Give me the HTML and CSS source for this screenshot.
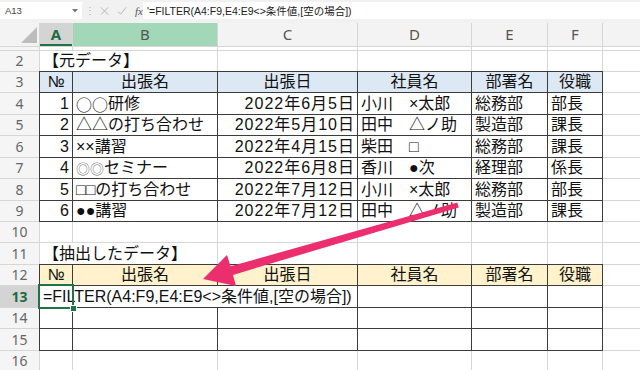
FILE: index.html
```html
<!DOCTYPE html>
<html lang="ja">
<head>
    <meta charset="UTF-8">
    <title>FILTER関数 - Excel</title>
    <link rel="stylesheet" href="styles.css">
</head>
<body>
    <div class="formula-bar">
        <div class="name-box">A13<svg width="6" height="4" viewBox="0 0 6 4"><path d="M0 0h6L3 3.5z" fill="#777"/></svg></div>
        <div class="tools">
            <span class="grip">⋮</span>
            <svg width="10" height="10" viewBox="0 0 10 10"><path d="M1 1l8 8M9 1l-8 8" stroke="#b8b8b8" stroke-width="1.1"/></svg>
            <svg width="11" height="10" viewBox="0 0 11 10"><path d="M1 5.5l3 3L10 1" stroke="#b8b8b8" stroke-width="1.1" fill="none"/></svg>
            <i class="fx">fx</i>
        </div>
        <div class="formula-input">'=FILTER(A4:F9,E4:E9&lt;&gt;条件値,[空の場合])</div>
    </div>

    <div class="sheet">
        <div class="corner"><svg width="16" height="16" viewBox="0 0 16 16"><path d="M16 0V16H0z" fill="#bdbdbd"/></svg></div>
        <div class="ch sel">A</div><div class="ch hl">B</div><div class="ch">C</div><div class="ch">D</div><div class="ch">E</div><div class="ch">F</div><div class="ch"></div>

        <div class="rh"></div><div></div><div></div><div></div><div></div><div></div><div></div><div></div>

        <div class="rh">2</div><div class="span2">【元データ】</div><div></div><div></div><div></div><div></div><div></div>

        <div class="rh">3</div>
        <div class="t blue ctr">№</div><div class="t blue ctr">出張名</div><div class="t blue ctr">出張日</div><div class="t blue ctr">社員名</div><div class="t blue ctr">部署名</div><div class="t blue ctr">役職</div><div></div>

        <div class="rh">4</div>
        <div class="t num">1</div><div class="t"><span class="jp">○○</span>研修</div><div class="t num date">2022年6月5日</div><div class="t">小川　×太郎</div><div class="t">総務部</div><div class="t">部長</div><div></div>

        <div class="rh">5</div>
        <div class="t num">2</div><div class="t">△△の打ち合わせ</div><div class="t num date">2022年5月10日</div><div class="t">田中　△ノ助</div><div class="t">製造部</div><div class="t">課長</div><div></div>

        <div class="rh">6</div>
        <div class="t num">3</div><div class="t">××講習</div><div class="t num date">2022年4月15日</div><div class="t">柴田　□</div><div class="t">総務部</div><div class="t">課長</div><div></div>

        <div class="rh">7</div>
        <div class="t num">4</div><div class="t"><span class="mark">◎◎</span>セミナー</div><div class="t num date">2022年6月8日</div><div class="t">香川　●次</div><div class="t">経理部</div><div class="t">係長</div><div></div>

        <div class="rh">8</div>
        <div class="t num">5</div><div class="t">□□の打ち合わせ</div><div class="t num date">2022年7月12日</div><div class="t">小川　×太郎</div><div class="t">総務部</div><div class="t">部長</div><div></div>

        <div class="rh">9</div>
        <div class="t num">6</div><div class="t">●●講習</div><div class="t num date">2022年7月12日</div><div class="t">田中　△ノ助</div><div class="t">製造部</div><div class="t">課長</div><div></div>

        <div class="rh">10</div><div></div><div></div><div></div><div></div><div></div><div></div><div></div>

        <div class="rh">11</div><div class="span2">【抽出したデータ】</div><div></div><div></div><div></div><div></div><div></div>

        <div class="rh">12</div>
        <div class="t cream ctr">№</div><div class="t cream ctr">出張名</div><div class="t cream ctr">出張日</div><div class="t cream ctr">社員名</div><div class="t cream ctr">部署名</div><div class="t cream ctr">役職</div><div></div>

        <div class="rh sel">13</div>
        <div class="active">=FILTER(A4:F9,E4:E9&lt;&gt;条件値,[空の場合])</div><div class="span2"></div><div class="t"></div><div class="t"></div><div class="t"></div><div></div>

        <div class="rh">14</div>
        <div class="t"></div><div class="t"></div><div class="t"></div><div class="t"></div><div class="t"></div><div class="t"></div><div></div>

        <div class="rh">15</div>
        <div class="t"></div><div class="t"></div><div class="t"></div><div class="t"></div><div class="t"></div><div class="t"></div><div></div>

        <div class="rh">16</div><div></div><div></div><div></div><div></div><div></div><div></div><div></div>
    </div>

    <svg class="arrow" width="640" height="370" viewBox="0 0 640 370">
        <path d="M203 279L227 255L230.5 266.3L457.3 202.6L458.7 207.4L233 274.9L236 286Z" fill="#ec2d6e"/>
    </svg>
</body>
</html>
```

FILE: styles.css
```css
body {
    margin: 0;
    width: 640px;
    height: 370px;
    overflow: hidden;
    position: relative;
    background: #fff;
    font-family: "Liberation Sans", "Noto Sans CJK JP", sans-serif;
}
.formula-bar {
    display: flex;
    align-items: flex-start;
    height: 23px;
    padding-top: 2px;
    box-sizing: border-box;
    background: #f1f1f1;
}
.name-box {
    width: 82px;
    height: 17px;
    display: flex;
    align-items: center;
    justify-content: space-between;
    padding: 0 4px 0 5px;
    box-sizing: border-box;
    background: #fff;
    font-size: 9.5px;
    color: #444;
}
.tools {
    width: 61px;
    height: 17px;
    display: flex;
    align-items: center;
    gap: 8px;
    padding-left: 3px;
    box-sizing: border-box;
}
.grip {
    font-size: 10px;
    color: #aaa;
    margin-right: -3px;
}
.fx {
    font-family: "Liberation Serif", serif;
    font-size: 11px;
    color: #555;
}
.formula-input {
    flex: 1;
    height: 17px;
    display: flex;
    align-items: center;
    padding-left: 4px;
    background: #fff;
    font-size: 10.5px;
    color: #222;
    white-space: nowrap;
}
.sheet {
    display: grid;
    width: 640px;
    grid-template-columns: 39px 32px 144px 139px 113px 75px 54px 1fr;
    grid-template-rows: 23px 3px 20px 20px 21px 20px 21px 20px 21px 20px 20px 21px 20px 21px 20px 21px 20px;
    gap: 1px;
    background: #d6d6d6;
    font-size: 16px;
    color: #111;
}
.sheet > div {
    display: flex;
    align-items: center;
    padding: 0 3px;
    background: #fff;
    white-space: nowrap;
    line-height: 1;
    min-width: 0;
}
.sheet > .corner {
    justify-content: flex-end;
    align-items: flex-end;
    padding: 0 2px 3px 0;
    background: #f3f3f3;
}
.sheet > .ch {
    justify-content: center;
    background: #f3f3f3;
    color: #555;
    font-family: "Noto Sans", sans-serif;
    font-size: 15px;
}
.sheet > .rh {
    justify-content: center;
    padding: 0;
    background: #f5f5f5;
    color: #666;
    font-family: "Noto Sans", sans-serif;
    font-size: 14px;
}
.sheet > .sel {
    background: #d4d4d4;
    color: #1d6b41;
    font-weight: bold;
}
.sheet > .ch.sel {
    box-shadow: inset 0 -2px #217346;
}
.sheet > .hl {
    background: #a2d7b7;
}
.span2 {
    grid-column: span 2;
}
.t {
    outline: 1px solid #3c3c3c;
}
.sheet > .blue {
    background: #dde8f5;
}
.sheet > .cream {
    background: #fff2cc;
}
.sheet > .ctr {
    justify-content: center;
}
.sheet > .num {
    justify-content: flex-end;
}
.sheet > .date {
    letter-spacing: 1px;
    padding-right: 2px;
}
.jp {
    font-family: "Noto Sans CJK JP", sans-serif;
}
.mark {
    font-family: "Noto Sans CJK JP", sans-serif;
    font-size: 14px;
    color: #777;
}
.sheet > .active {
    position: relative;
    z-index: 2;
    overflow: visible;
    outline: 2px solid #217346;
}
.active::after {
    content: "";
    position: absolute;
    right: -5px;
    bottom: -5px;
    width: 5px;
    height: 5px;
    background: #217346;
    border: 1px solid #fff;
}
.arrow {
    position: absolute;
    top: 0;
    left: 0;
    z-index: 5;
}
```
